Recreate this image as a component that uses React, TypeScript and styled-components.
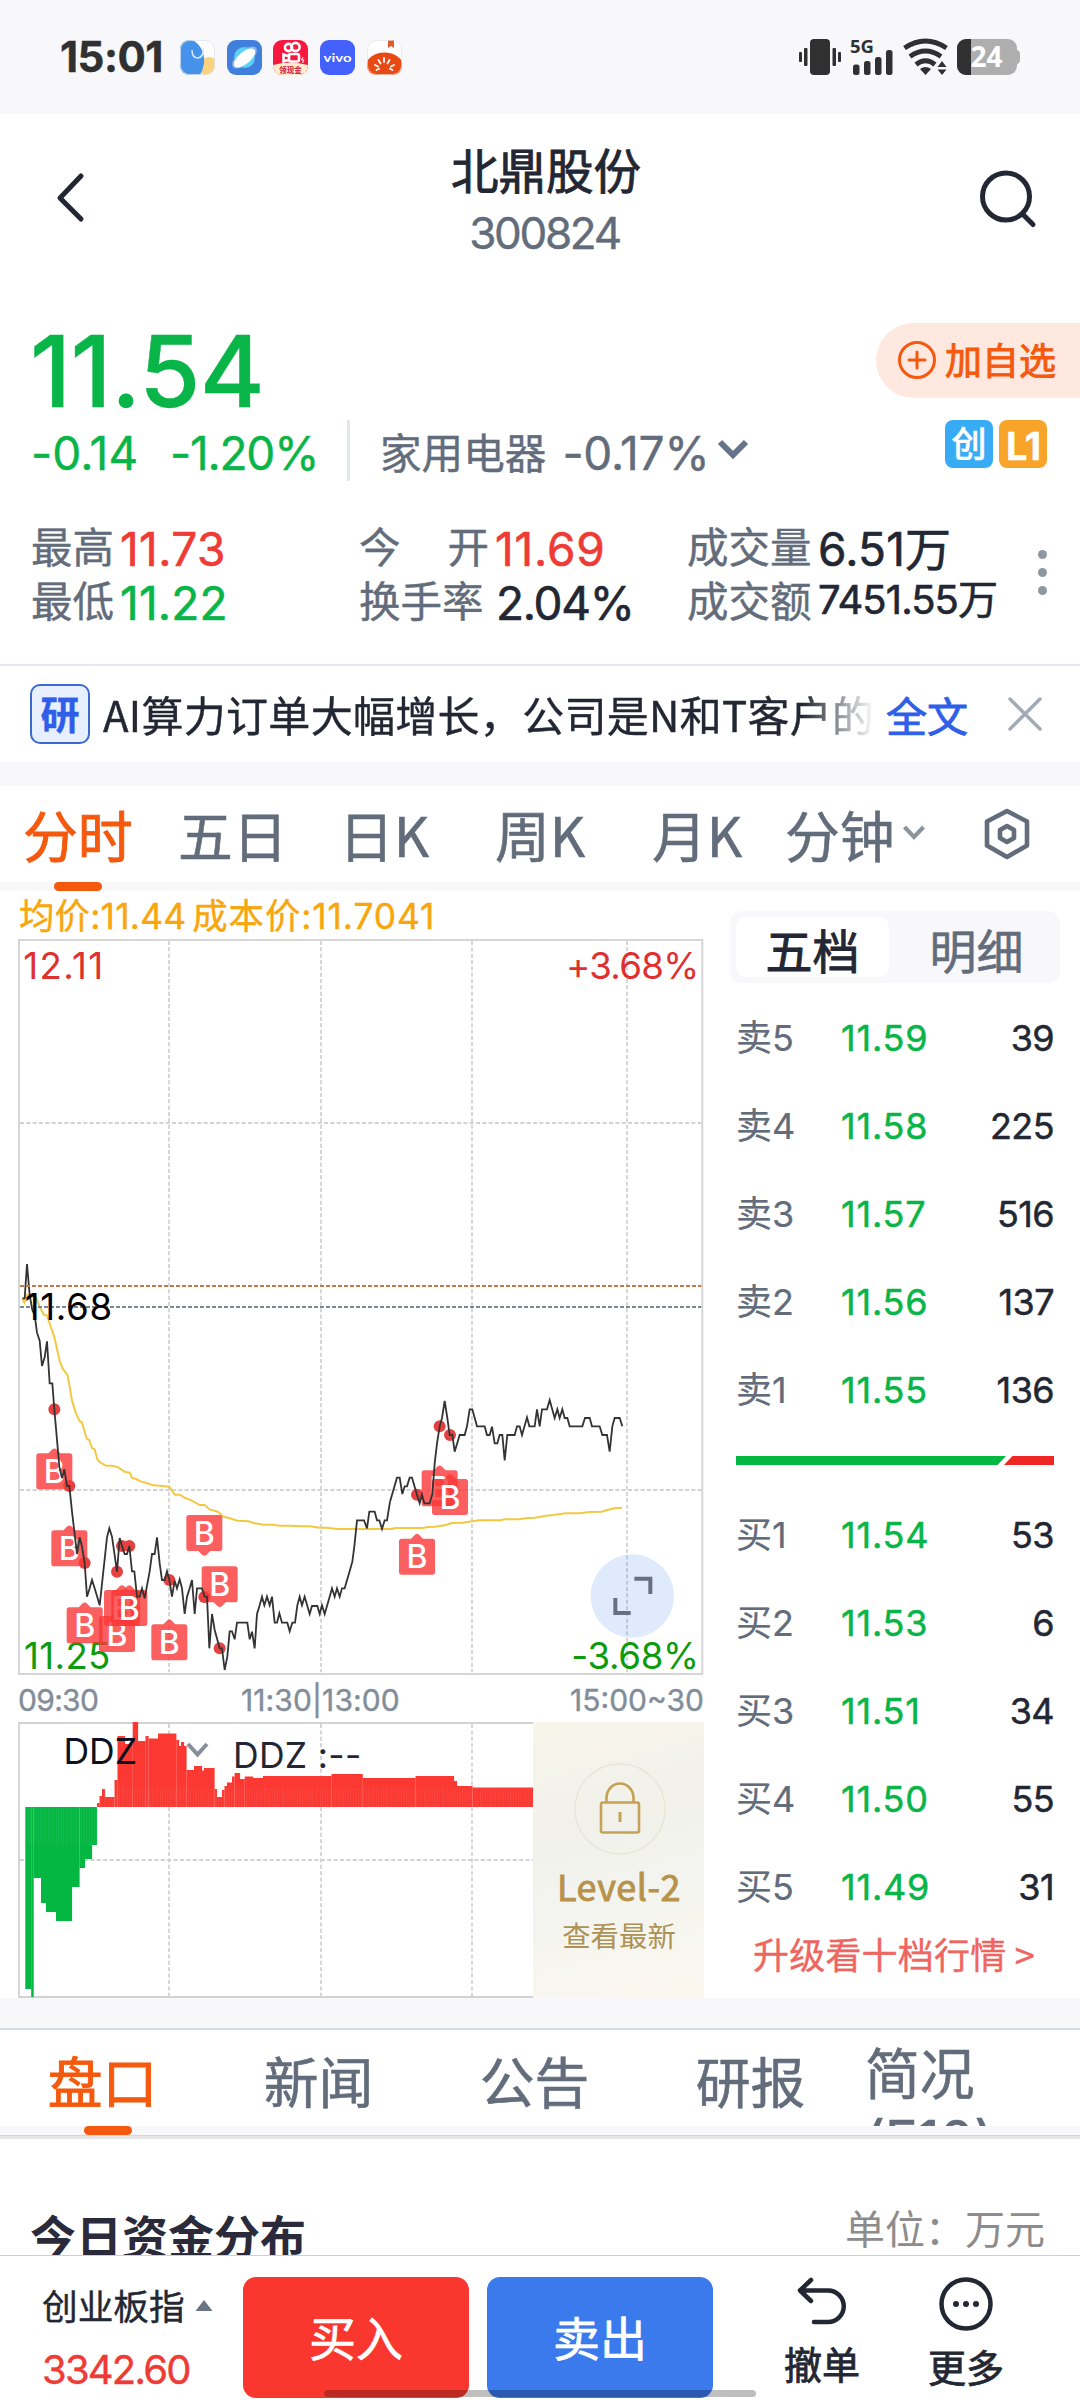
import React from "react";
import styled, { createGlobalStyle } from "styled-components";

const INK = "#232733";
const SLATE = "#626c7b";
const GREEN = "#09b548";
const RED = "#ef3b36";
const ORANGE = "#f4590e";
const MIST = "#f8f8fb";
const BLUE = "#2f5fe8";
const NUMERIC = `Inter, "Noto Sans CJK SC", sans-serif`;

const Global = createGlobalStyle`
  * { box-sizing: border-box; }
  body { margin: 0; background: #fff; }
  button { border: 0; padding: 0; background: none; font: inherit; color: inherit; }
`;

const Page = styled.main`
  position: relative;
  width: 1080px;
  height: 2400px;
  overflow: hidden;
  display: flex;
  flex-direction: column;
  background: #fff;
  color: ${INK};
  font-family: "Noto Sans CJK SC", "Noto Sans", sans-serif;
  -webkit-text-stroke: 0.4px;
  white-space: nowrap;
  line-height: 1;
`;

/* ---------- status bar ---------- */
const StatusBar = styled.header`
  height: 114px;
  flex: none;
  background: ${MIST};
  display: flex;
  align-items: center;
  padding: 0 58px 0 60px;
  svg { -webkit-text-stroke: 0; }
`;
const Clock = styled.span`
  width: 120px;
  padding-bottom: 1px;
  font-family: ${NUMERIC};
  font-size: 42px;
  font-weight: 700;
  letter-spacing: -0.5px;
  color: #303030;
`;
const AppIcons = styled.div`
  display: flex;
  gap: 11.7px;
`;
const SystemIcons = styled.div`
  margin-left: auto;
  display: flex;
`;

/* ---------- header ---------- */
const Header = styled.nav`
  height: 186px;
  flex: none;
  display: grid;
  grid-template-columns: 120px 1fr 120px;
  align-items: start;
  padding-top: 25px;
`;
const IconButton = styled.button<{ $top: number; $left: number }>`
  display: block;
  padding: ${(p) => p.$top}px 0 0 ${(p) => p.$left}px;
  text-align: left;
  svg { display: block; }
`;
const Titles = styled.div`
  display: flex;
  flex-direction: column;
  align-items: center;
  padding-left: 12px;
`;
const StockName = styled.h1`
  margin: 0;
  font-size: 47.5px;
  line-height: 60px;
  font-weight: 400;
  -webkit-text-stroke: 0.9px;
`;
const StockCode = styled.span`
  font-family: ${NUMERIC};
  font-size: 44px;
  line-height: 68px;
  padding-right: 3px;
  color: ${SLATE};
  letter-spacing: -2.3px;
`;

/* ---------- quote ---------- */
const Quote = styled.section`
  height: 364px;
  flex: none;
  display: flex;
  flex-direction: column;
`;
const PriceRow = styled.div`
  display: flex;
  justify-content: space-between;
  height: 120px;
`;
const Price = styled.strong`
  padding: 16px 0 0 30px;
  font-family: ${NUMERIC};
  font-size: 99px;
  line-height: 110px;
  font-weight: 500;
  letter-spacing: -0.6px;
  color: ${GREEN};
`;
const FollowButton = styled.button`
  margin-top: 23px;
  width: 204px;
  height: 75px;
  border-radius: 38px 0 0 38px;
  background: #fee8e0;
  color: ${ORANGE};
  display: flex;
  align-items: center;
  padding: 0 0 2px 21px;
  gap: 8px;
  font-size: 37px;
  -webkit-text-stroke: 0.9px;
`;
const ChangeRow = styled.div`
  height: 61px;
  display: flex;
  align-items: center;
  padding: 0 33px 0 31px;
  font-size: 46px;
`;
const Change = styled.span<{ $w: number; $ls: number }>`
  width: ${(p) => p.$w}px;
  padding-top: 4px;
  font-family: ${NUMERIC};
  color: ${GREEN};
  letter-spacing: ${(p) => p.$ls}px;
  line-height: 60px;
`;
const Sector = styled.div`
  border-left: 3px solid #e2e6ef;
  height: 61px;
  padding-left: 30px;
  display: flex;
  align-items: center;
  gap: 12px;
  color: ${SLATE};
  line-height: 60px;
`;
const SectorName = styled.span`
  font-size: 41.6px;
`;
const SectorChange = styled.span`
  padding-top: 4px;
  margin-left: 4px;
  width: 143px;
  font-family: ${NUMERIC};
  letter-spacing: -0.2px;
`;
const Badges = styled.div`
  margin-left: auto;
  align-self: flex-start;
  display: flex;
  gap: 6px;
`;
const Badge = styled.span<{ $bg: string }>`
  width: 48px;
  height: 48px;
  border-radius: 8px;
  background: ${(p) => p.$bg};
  color: #fff;
  font-size: 35px;
  line-height: 44px;
  font-weight: 500;
  text-align: center;
`;
const LevelBadge = styled(Badge)`
  font-family: ${NUMERIC};
  font-size: 38px;
  font-weight: 700;
  line-height: 52px;
  letter-spacing: -1px;
`;
const Stats = styled.div`
  margin-top: 38px;
  height: 108px;
  padding-left: 31px;
  display: grid;
  grid-template-columns: 328px 328px 345px 20px;
  grid-template-rows: 54px 54px;
  grid-auto-flow: column;
`;
const Stat = styled.div`
  display: flex;
  align-items: center;
  line-height: 54px;
`;
const StatLabel = styled.span<{ $w: number; $spread?: boolean }>`
  width: ${(p) => p.$w}px;
  padding: 0 ${(p) => (p.$spread ? 6 : 0)}px 2px 0;
  display: flex;
  justify-content: space-between;
  flex: none;
  font-size: 41.5px;
  color: ${SLATE};
`;
const StatValue = styled.span<{ $c?: string; $small?: boolean; $ls: number }>`
  padding-top: ${(p) => (p.$small ? 0 : 6)}px;
  font-family: ${NUMERIC};
  color: ${(p) => p.$c ?? INK};
  font-size: ${(p) => (p.$small ? 40 : 46)}px;
  letter-spacing: ${(p) => p.$ls}px;
  -webkit-text-stroke: 0.6px;
`;
const StatMore = styled.div`
  grid-column: 4;
  grid-row: 1 / 3;
  display: flex;
  flex-direction: column;
  align-items: center;
  justify-content: center;
  gap: 9px;
  padding: 0 0 2px 0;
  i { width: 9px; height: 9px; border-radius: 50%; background: #8d97a2; }
`;

/* ---------- news strip ---------- */
const News = styled.section`
  height: 98px;
  flex: none;
  border-top: 2px solid #e5e8ed;
  display: flex;
  align-items: center;
  padding-left: 30px;
  font-size: 42px;
`;
const NewsTag = styled.span`
  width: 60px;
  height: 60px;
  border-radius: 10px;
  border: 2px solid #3a69d2;
  background: #e8effe;
  color: ${BLUE};
  font-size: 39px;
  font-weight: 700;
  line-height: 52px;
  text-align: center;
`;
const NewsText = styled.p`
  margin: 0 0 0 13px;
  width: 769px;
  overflow: hidden;
  line-height: 58px;
  letter-spacing: 0.3px;
  -webkit-mask-image: linear-gradient(90deg, #000 700px, transparent 772px);
  mask-image: linear-gradient(90deg, #000 700px, transparent 772px);
`;
const NewsLink = styled.a`
  margin-left: 14px;
  width: 122px;
  color: ${BLUE};
  font-size: 41px;
  line-height: 58px;
  -webkit-text-stroke: 0.9px;
`;
const Band = styled.div<{ $h: number }>`
  height: ${(p) => p.$h}px;
  flex: none;
  background: ${MIST};
`;

/* ---------- period tabs ---------- */
const PeriodTabs = styled.div`
  height: 96px;
  flex: none;
  padding: 0 0 2px 23px;
  display: grid;
  grid-template-columns: 155px 161px 156px 157px 133px 110px auto auto;
  align-items: center;
  justify-content: start;
`;
const Tab = styled.button<{ $on?: boolean }>`
  font-size: 54.8px;
  line-height: 70px;
  text-align: left;
  color: ${(p) => (p.$on ? ORANGE : SLATE)};
  -webkit-text-stroke: ${(p) => (p.$on ? 0.9 : 0.6)}px;
`;
const DropArrow = styled.svg`
  margin-left: 8px;
`;
const Gear = styled.svg`
  margin: 2px 0 0 57px;
`;
const TabTrack = styled.div<{ $x: number }>`
  height: 9px;
  flex: none;
  background: ${MIST};
  padding-left: ${(p) => p.$x}px;
  &::before {
    content: "";
    display: block;
    width: 48px;
    height: 9px;
    border-radius: 4.5px;
    background: ${ORANGE};
  }
`;

/* ---------- chart + order book ---------- */
const Market = styled.section`
  height: 1107px;
  flex: none;
  display: flex;
`;
const ChartColumn = styled.div`
  width: 730px;
  padding-left: 18px;
  svg { display: block; }
`;
const AvgLine = styled.div`
  height: 48px;
  padding-left: 1px;
  font-family: ${NUMERIC};
  font-size: 35.4px;
  line-height: 52px;
  color: #f8a60c;
  display: flex;
  gap: 6px;
`;
const AvgPrice = styled.span`
  letter-spacing: 0.2px;
`;
const CostPrice = styled.span`
  letter-spacing: 0.9px;
`;
const TimeAxis = styled.div`
  width: 686px;
  height: 47px;
  display: grid;
  grid-template-columns: 223px 1fr auto;
  font-family: ${NUMERIC};
  font-size: 30px;
  line-height: 50px;
  color: #828d99;
`;
const Time = styled.span<{ $ls?: number }>`
  letter-spacing: ${(p) => p.$ls ?? 0}px;
`;
const SubChart = styled.div`
  width: 686px;
  height: 276px;
  display: flex;
`;
const LockPanel = styled.div`
  width: 171px;
  height: 276px;
  display: flex;
  flex-direction: column;
  align-items: center;
  padding: 41px 0 0 1px;
  background: linear-gradient(165deg, #f8f5ea 0%, #f1f1ea 35%, #f3f4ef 60%, #faf7ee 100%);
`;
const LockTitle = styled.span`
  margin-top: 5px;
  font-size: 36px;
  line-height: 46px;
  font-weight: 400;
  letter-spacing: 0.5px;
  color: #b8924a;
  -webkit-text-stroke: 0.9px;
`;
const LockHint = styled.span`
  font-size: 28.4px;
  line-height: 53px;
  color: #ac9254;
  -webkit-text-stroke: 0;
`;
const Book = styled.div`
  width: 330px;
  padding-top: 20px;
`;
const Segment = styled.div`
  height: 72px;
  border-radius: 12px;
  background: ${MIST};
  padding: 6px;
  display: flex;
  margin-bottom: 9px;
`;
const SegmentItem = styled.button<{ $on?: boolean }>`
  width: 153px;
  height: 60px;
  border-radius: 10px;
  font-size: 47px;
  line-height: 64px;
  background: ${(p) => (p.$on ? "#fff" : "transparent")};
  color: ${(p) => (p.$on ? INK : SLATE)};
  -webkit-text-stroke: ${(p) => (p.$on ? 0.9 : 0.6)}px;
  & + & { margin-left: 11px; }
`;
const Level = styled.div`
  height: 88px;
  display: grid;
  grid-template-columns: 105px 92px 1fr;
  padding: 0 6px 0 6px;
  font-family: ${NUMERIC};
  font-size: 36px;
  line-height: 93px;
  -webkit-text-stroke: 0.5px;
`;
const LevelName = styled.span`
  color: ${SLATE};
  -webkit-text-stroke: 0.2px;
`;
const LevelPrice = styled.span`
  color: ${GREEN};
  letter-spacing: 0.8px;
`;
const LevelCount = styled.span`
  text-align: right;
  letter-spacing: -0.6px;
`;
const Ratio = styled.svg`
  display: block;
  margin: 24px 0 24px 6px;
`;
const Upgrade = styled.a`
  display: block;
  padding-left: 23px;
  font-size: 36px;
  line-height: 49px;
  letter-spacing: 0.2px;
  color: #ef6560;
`;

/* ---------- info tabs ---------- */
const InfoTabs = styled.div`
  height: 98px;
  flex: none;
  border-top: 2px solid #d5dbe4;
  display: grid;
  grid-template-columns: 216px 216px 216px 216px 1fr;
  overflow: hidden;
`;
const InfoTab = styled(Tab)`
  height: 96px;
  padding: 0 11px 0 0;
  text-align: center;
  line-height: 98px;
`;
const WrappedTab = styled(Tab)`
  align-self: start;
  width: 150px;
  padding-left: 1px;
  white-space: normal;
  font-family: ${NUMERIC};
  line-height: 66px;
  margin-top: 11px;
`;
const Rule = styled.div`
  height: 4px;
  flex: none;
  background: #e6e6e7;
  border-top: 1px solid #cfd6de;
`;
const Funds = styled.section`
  height: 116px;
  flex: none;
  overflow: hidden;
  display: flex;
  justify-content: space-between;
  padding: 60px 35px 0 30px;
`;
const FundsTitle = styled.h2`
  margin: 0;
  font-size: 46px;
  line-height: 70px;
  font-weight: 700;
  color: #2b2a3b;
  -webkit-text-stroke: 0;
`;
const FundsUnit = styled.span`
  font-size: 40px;
  line-height: 57px;
  color: #8c8c8c;
  -webkit-text-stroke: 0;
`;

/* ---------- bottom bar ---------- */
const BottomBar = styled.footer`
  height: 145px;
  flex: none;
  border-top: 1px solid #c9d0d6;
  display: flex;
  background: #fff;
`;
const Index = styled.div`
  width: 243px;
  padding: 25px 0 0 42px;
`;
const IndexName = styled.div`
  display: flex;
  align-items: center;
  gap: 10px;
  font-size: 35.7px;
  line-height: 48px;
`;
const IndexValue = styled.div`
  margin-top: 13px;
  font-family: ${NUMERIC};
  font-size: 40px;
  line-height: 56px;
  letter-spacing: -1.8px;
  color: ${RED};
`;
const Trade = styled.button<{ $bg: string }>`
  width: 226px;
  height: 121px;
  margin: 21px 18px 0 0;
  border-radius: 13px;
  background: ${(p) => p.$bg};
  color: #fff;
  font-size: 47px;
  line-height: 115px;
  padding-bottom: 5px;
  -webkit-text-stroke: 0.7px;
`;
const Action = styled.button<{ $w: number; $lh: number }>`
  width: ${(p) => p.$w}px;
  display: flex;
  flex-direction: column;
  align-items: center;
  padding-top: 20px;
  font-size: 38px;
  line-height: ${(p) => p.$lh}px;
  -webkit-text-stroke: 0.8px;
`;
const HomeIndicator = styled.div`
  position: absolute;
  left: 324px;
  top: 2390px;
  width: 432px;
  height: 7px;
  border-radius: 4px;
  background: rgba(0, 0, 0, 0.25);
`;

const PRICE_MORNING =
  "67,295 74,295 81,192 89,285 97,330 104,345 111,398 119,422 126,498 134,472 141,424 149,550 157,550 163,628 178,800 186,834 193,808 201,858 208,858 216,935 231,1062 239,1012 246,1040 254,1089 261,1190 269,1165 276,1140 284,1165 299,1216 321,1012 328,985 336,1010 351,1115 359,1014 366,1038 374,1062 381,1062 388,1038 396,1114 403,1114 411,1190 419,1190 426,1165 434,1195 449,1114 456,1062 464,1062 471,1012 479,1090 486,1140 494,1140 501,1114 508,1140 516,1190 524,1142 531,1165 539,1138 546,1165 554,1242 561,1190 569,1165 576,1140 584,1242 591,1165 606,1165 614,1190 621,1190 628,1345 636,1242 644,1290 659,1345 666,1345 674,1410 682,1370 689,1294 696,1294 704,1318 711,1268 742,1268 749,1318 756,1295 764,1345 771,1242 779,1216 786,1190 793,1216 801,1190 809,1216 816,1190 824,1268 831,1268 838,1240 846,1268 862,1268 869,1294 877,1268 885,1268 892,1216 899,1190 906,1216 914,1190 929,1242 936,1218 952,1218 959,1242 966,1216 974,1242 989,1190 996,1165 1004,1190 1011,1165 1019,1190 1026,1165 1034,1165 1050,1110 1057,1085 1063,1040 1071,961 1092,961 1101,985 1108,935 1124,935 1131,961 1138,961 1146,987 1154,961 1161,961 1170,905";
const PRICE_AFTERNOON =
  "150,455 171,383 179,383 187,432 194,409 201,409 209,383 216,383 231,434 239,460 246,434 253,460 269,460 277,432 284,340 291,280 299,229 306,204 314,153 322,204 329,255 337,255 344,305 352,278 359,255 374,255 381,229 389,178 397,178 411,229 434,229 441,255 449,255 456,230 464,280 472,280 479,255 487,255 494,331 502,255 524,255 531,229 539,229 546,255 561,202 568,229 584,229 591,178 599,229 606,178 621,178 629,150 644,204 652,178 659,204 667,178 674,204 682,204 689,229 727,229 735,204 749,204 756,229 779,229 787,255 801,255 809,305 817,229 824,204 839,204 847,229";
const AVG_MORNING =
  "67,296 73,308 82,284 108,292 120,322 132,345 141,346 152,380 163,410 172,452 180,486 188,506 202,525 209,560 216,602 228,640 238,662 246,668 260,716 268,720 276,744 284,748 292,778 300,787 318,797 336,797 352,801 376,816 389,818 396,834 408,837 424,845 440,849 460,856 480,857 508,860 524,884 540,884 556,894 574,901 599,915 614,915 630,929 654,935 670,950 690,955 712,962 746,964 760,969 790,974 820,974 840,977 870,977 900,979 930,979 960,983 980,983 1012,987 1180,987";
const AVG_AFTERNOON =
  "150,537 168,534 246,534 266,531 286,530 318,525 334,519 368,518 396,514 418,511 482,511 494,508 538,508 556,505 584,503 618,497 640,495 676,490 718,490 748,486 784,485 800,481 822,475 846,473";

type Point = [number, number];
const DOTS: Point[] = [
  [163, 628], [208, 858], [254, 1089], [351, 1115], [366, 1038], [388, 1038],
  [508, 1140], [613, 1191], [659, 1345], [1319, 679], [1350, 705], [1251, 884],
];
const BUYS: [number, number, boolean][] = [
  [163, 814, true], [208, 1045, true], [254, 1276, true], [351, 1302, true],
  [366, 1224, true], [388, 1224, true], [508, 1327, true], [613, 999, false],
  [659, 1153, false], [1319, 865, true], [1350, 891, true], [1251, 1070, true],
];

function BuyMark({ x, y, up }: { x: number; y: number; up: boolean }) {
  return (
    <g transform={`translate(${x} ${y})`}>
      <path
        d={
          up
            ? "M-46-54H-18L-6-66Q0-71 6-66L18-54H46Q54-54 54-46V46Q54 54 46 54H-46Q-54 54-54 46V-46Q-54-54-46-54Z"
            : "M-46-54H46Q54-54 54-46V46Q54 54 46 54H18L6 66Q0 71-6 66L-18 54H-46Q-54 54-54 46V-46Q-54-54-46-54Z"
        }
        fill="#fa3737"
        opacity=".8"
      />
      <text x="0" y="35" fontSize="96" fontWeight="500" fill="#fff" textAnchor="middle">B</text>
    </g>
  );
}

/* One user unit is a third of a pixel. */
function MinuteChart() {
  return (
    <svg width="686" height="736" viewBox="0 0 2058 2208" fontFamily={NUMERIC}>
      <g fill="none" stroke="#d2d2d2" strokeWidth="5.4">
        <rect x="3" y="3" width="2050" height="2202" />
        <path d="M453 6V2200M909 6V2200M1362 6V2200M1827 6V2200M6 552H2050M6 1653H2050" strokeDasharray="12 7" />
      </g>
      <g fontSize="110">
        <text x="16" y="121" fill="#df2f2f" letterSpacing="4">12.11</text>
        <text x="2042" y="121" fill="#df2f2f" textAnchor="end" letterSpacing="-2">+3.68%</text>
        <text x="18" y="2191" fill="#0c9b0c" letterSpacing="1">11.25</text>
      </g>
      <g transform="translate(-54 783)">
        <polyline points={AVG_MORNING} fill="none" stroke="#f3c944" strokeWidth="6" />
        {DOTS.map(([x, y], i) => <circle key={i} cx={x} cy={y} r="18" fill="#e64141" />)}
        {BUYS.map(([x, y, up], i) => <BuyMark key={i} x={x} y={y} up={up} />)}
        <polyline points={PRICE_MORNING} fill="none" stroke="#333" strokeWidth="5.4" />
      </g>
      <g transform="translate(966 1233)" fill="none">
        <polyline points={AVG_AFTERNOON} stroke="#f3c944" strokeWidth="6" />
        <polyline points={PRICE_AFTERNOON} stroke="#333" strokeWidth="5.4" />
      </g>
      <path d="M6 1041H2050" stroke="#c57a45" strokeWidth="6" strokeDasharray="12 6" />
      <path d="M6 1104H2050" stroke="#7d8691" strokeWidth="6" strokeDasharray="12 6" />
      <text x="20" y="1143" fontSize="110" letterSpacing="2" fill="#000">11.68</text>
      <circle cx="1843" cy="1971" r="125" fill="#3a7aec" opacity=".16" />
      <path d="M1849 1919H1897V1965M1792 1977V2022H1838" fill="none" stroke="#667081" strokeWidth="12" />
      <text x="2042" y="2191" fontSize="110" letterSpacing="-1" fill="#0c9b0c" textAnchor="end">-3.68%</text>
    </svg>
  );
}

/* [from, to, height] runs in px, measured from the zero line. */
const OUTFLOW: [number, number, number][] = [
  [25.3, 31.2, 182], [31.2, 33.6, 190], [33.6, 41, 71], [41, 46, 96], [46, 56, 105],
  [56, 72, 114], [72, 79.5, 80], [79.5, 85, 61], [85, 92, 52], [92, 97, 38],
];
const INFLOW: [number, number, number][] = [
  [97, 99.5, 4], [99.5, 102, 11], [102, 105, 18], [105, 114.5, 10], [114.5, 117.5, 27],
  [117.5, 125, 71], [125, 132.7, 63], [132.7, 138, 85], [138, 145.5, 66], [145.5, 148.5, 71],
  [148.5, 158, 68.5], [158, 176.3, 73.5], [176.3, 179, 67], [179, 181, 61], [181, 184, 65],
  [184, 186.5, 61], [186.5, 194, 37], [194, 202, 41], [202, 204, 36.5], [204, 214.5, 39],
  [214.5, 217, 18], [217, 222, 10], [222, 224.5, 17], [224.5, 227, 21], [227, 232, 24.5],
  [232, 234.6, 30.5], [234.6, 240, 34], [240, 244.7, 28], [244.7, 253, 30.5], [253, 263, 29],
  [263, 331.5, 31], [331.5, 362.7, 33], [362.7, 415.5, 29], [415.5, 454, 31],
  [454, 457, 26], [457, 472.5, 21], [472.5, 533, 19.5],
];

function DdzChart() {
  const grain = Array.from({ length: 199 }, (_, i) => 27.9 + i * 2.54);
  return (
    <svg width="515" height="276" viewBox="18 0 515 276" fontFamily={NUMERIC}>
      <g fill="none" stroke="#d2d2d2" strokeWidth="1.8">
        <path d="M533 1H19V275H533" />
        <path d="M169 2V274M321 2V274M472 2V274M20 138H533" strokeDasharray="4 2.4" />
      </g>
      {OUTFLOW.map(([a, b, h]) => <rect key={a} x={a} y="85" width={b - a + 0.1} height={h} fill="#04b743" />)}
      {INFLOW.map(([a, b, h]) => <rect key={a} x={a} y={85 - h} width={b - a + 0.1} height={h} fill="#fb3831" />)}
      <g fill="#fff" opacity=".1">
        {grain.map((x) => <rect key={x} x={x} y={x < 97 ? 85 : 66} width=".6" height={x < 97 ? 38 : 19} />)}
      </g>
      <g fontSize="35.5">
        <text x="63.500" y="41.500" fill="#0b1120">DDZ</text>
        <text x="233" y="46" fill={INK} letterSpacing=".3" xmlSpace="preserve">DDZ :--</text>
      </g>
      <path d="M188 22L197.5 32.5L207 22" fill="none" stroke="#858f9b" strokeWidth="4" />
    </svg>
  );
}

const ASKS = [["卖5", "11.59", "39"], ["卖4", "11.58", "225"], ["卖3", "11.57", "516"], ["卖2", "11.56", "137"], ["卖1", "11.55", "136"]];
const BIDS = [["买1", "11.54", "53"], ["买2", "11.53", "6"], ["买3", "11.51", "34"], ["买4", "11.50", "55"], ["买5", "11.49", "31"]];

function Levels({ rows }: { rows: string[][] }) {
  return (
    <>
      {rows.map(([name, price, count]) => (
        <Level key={name}>
          <LevelName>{name}</LevelName>
          <LevelPrice>{price}</LevelPrice>
          <LevelCount>{count}</LevelCount>
        </Level>
      ))}
    </>
  );
}

function AppIconRow() {
  return (
    <AppIcons>
      <svg width="35" height="35" viewBox="0 0 35 35">
        <clipPath id="tile"><rect width="35" height="35" rx="9" /></clipPath>
        <g clipPath="url(#tile)">
          <rect width="35" height="35" fill="#fff" />
          <circle cx="29" cy="27" r="10" fill="#fbd37e" />
          <path d="M0 0H12C21 4 25 14 24 23Q23 30 20 35H0Z" fill="#4492ea" />
          <path d="M12 10Q12 18 18 18Q24 17 23 8" fill="none" stroke="#d4e8ff" strokeWidth="1.5" />
        </g>
        <rect x=".5" y=".5" width="34" height="34" rx="9" fill="none" stroke="#dde1e8" strokeWidth=".8" />
      </svg>
      <svg width="35" height="35" viewBox="0 0 35 35">
        <rect width="35" height="35" rx="9" fill="#417fdd" />
        <ellipse cx="17.5" cy="17.5" rx="15" ry="7" transform="rotate(-40 17.5 17.5)" fill="#8db2ee" />
        <circle cx="17.5" cy="17.5" r="10.5" fill="#5dd0f6" />
        <ellipse cx="17.5" cy="18" rx="13" ry="6" transform="rotate(-40 17.5 18)" fill="#fff" />
      </svg>
      <svg width="35" height="35" viewBox="0 0 35 35">
        <g clipPath="url(#tile)">
          <rect width="35" height="35" fill="#f8173f" />
          <path d="M0 25Q17 20 35 25V35H0Z" fill="#ffeccb" />
          <g fill="none" stroke="#fff" strokeWidth="2.6">
            <circle cx="15.5" cy="7.5" r="3.6" />
            <circle cx="22.5" cy="7" r="4.1" />
            <rect x="16" y="14" width="10" height="7.5" rx="2" />
            <path d="M15 16L10.500 14.500V21.500L15 20" />
          </g>
          <path d="M30 17L28.500 20H31L29.500 23" stroke="#fff" fill="none" />
          <text x="17.500" y="33" fontSize="7.500" fontWeight="700" textAnchor="middle" fill="#d4143a">领现金</text>
        </g>
      </svg>
      <svg width="35" height="35" viewBox="0 0 35 35">
        <rect width="35" height="35" rx="9" fill="#4360fb" />
        <text x="17.500" y="21.500" fontFamily="Lato, sans-serif" fontSize="12" textLength="28" lengthAdjust="spacingAndGlyphs" textAnchor="middle" fontWeight="700" fill="#fff">vivo</text>
      </svg>
      <svg width="35" height="35" viewBox="0 0 35 35">
        <g clipPath="url(#tile)">
          <rect width="35" height="35" fill="#fff" />
          <path d="M21 0H27V8L24 6L21 8Z" fill="#e15a2c" />
          <ellipse cx="17.500" cy="26" rx="18.500" ry="13.500" fill="#e84a15" />
          <path d="M17 18V22M11.500 20L13.500 23.500M22.500 20L20.500 23.500M8 25L11 26.500M27 25L24 26.500M9.500 30L12 28.800M25.500 30L23 28.800" stroke="#fff" strokeWidth="1.800" strokeLinecap="round" />
        </g>
        <rect x=".5" y=".5" width="34" height="34" rx="9" fill="none" stroke="#e4e0e0" strokeWidth=".7" />
      </svg>
    </AppIcons>
  );
}

function SystemIconRow() {
  return (
    <SystemIcons>
      <svg width="223" height="38" viewBox="799 38 223 38" fontFamily={`"Noto Sans", sans-serif`}>
        <g fill="#303030">
          <rect x="810" y="39" width="20" height="36" rx="4" />
          <rect x="804" y="48" width="3.500" height="18" rx="1" />
          <rect x="799" y="52" width="3" height="10" rx="1" />
          <rect x="832.500" y="48" width="3.500" height="18" rx="1" />
          <rect x="838" y="52" width="3" height="10" rx="1" />
          <rect x="853" y="64.500" width="6.500" height="10.500" rx="2.500" />
          <rect x="864" y="61" width="6.500" height="14" rx="2.500" />
          <rect x="875" y="57" width="6.500" height="18" rx="2.500" />
          <rect x="886" y="50" width="6.500" height="25" rx="2.500" />
          <path d="M920 69L925.500 75L931 69Q925.500 65 920 69Z" />
          <path d="M937.500 67L942 61L946.500 67ZM937.500 69.500L942 75L946.500 69.500Z" />
        </g>
        <text x="850" y="53" fontSize="18.500" fontWeight="700" fill="#303030">5G</text>
        <g fill="none" stroke="#303030" strokeWidth="4.800">
          <path d="M904.500 48Q925.500 34 946.500 48" />
          <path d="M910 56.500Q925.500 45.500 941 56.500" />
          <path d="M916 64.500Q925.500 57 935 64.500" />
        </g>
        <clipPath id="cell"><rect x="957" y="39" width="60" height="36" rx="9" /></clipPath>
        <path d="M1015 50H1017Q1020 51 1020 54V60Q1020 63 1017 64H1015Z" fill="#aeaeae" />
        <g clipPath="url(#cell)">
          <rect x="957" y="39" width="60" height="36" fill="#aeaeae" />
          <rect x="957" y="39" width="14" height="36" fill="#303030" />
        </g>
        <text x="986.500" y="67" fontSize="28" fontWeight="700" textAnchor="middle" fill="#fff">24</text>
      </svg>
    </SystemIcons>
  );
}

export default function App() {
  return (
    <Page>
      <Global />
      <StatusBar>
        <Clock>15:01</Clock>
        <AppIconRow />
        <SystemIconRow />
      </StatusBar>

      <Header>
        <IconButton $top={33} $left={54}>
          <svg width="34" height="52" viewBox="0 0 34 52" fill="none" stroke={INK} strokeWidth="5" strokeLinecap="round" strokeLinejoin="round">
            <path d="M27 4L6 26L27 47" />
          </svg>
        </IconButton>
        <Titles>
          <StockName>北鼎股份</StockName>
          <StockCode>300824</StockCode>
        </Titles>
        <IconButton $top={29} $left={18}>
          <svg width="62" height="62" viewBox="0 0 62 62" fill="none" stroke={INK} strokeWidth="5" strokeLinecap="round">
            <circle cx="28" cy="28.500" r="23.500" />
            <path d="M45.500 47L55 56.500" />
          </svg>
        </IconButton>
      </Header>

      <Quote>
        <PriceRow>
          <Price>11.54</Price>
          <FollowButton>
            <svg width="40" height="40" viewBox="0 0 40 40" fill="none" stroke={ORANGE} strokeWidth="3">
              <circle cx="20" cy="20" r="17.500" />
              <path d="M12 20H28M20 12V28" strokeLinecap="round" />
            </svg>
            加自选
          </FollowButton>
        </PriceRow>
        <ChangeRow>
          <Change $w={139} $ls={0.1}>-0.14</Change>
          <Change $w={177} $ls={-1.2}>-1.20%</Change>
          <Sector>
            <SectorName>家用电器</SectorName>
            <SectorChange>-0.17%</SectorChange>
            <svg width="32" height="26" viewBox="0 0 32 26" fill="none" stroke="#65748a" strokeWidth="6">
              <path d="M3 4L16 17L29 4" />
            </svg>
          </Sector>
          <Badges>
            <Badge $bg="#37acf5">创</Badge>
            <LevelBadge $bg="#f8a32a">L1</LevelBadge>
          </Badges>
        </ChangeRow>
        <Stats>
          <Stat><StatLabel $w={89}>最高</StatLabel><StatValue $ls={0.4} $c={RED}>11.73</StatValue></Stat>
          <Stat><StatLabel $w={89}>最低</StatLabel><StatValue $ls={0.2} $c={GREEN}>11.22</StatValue></Stat>
          <Stat><StatLabel $w={136} $spread><span>今</span><span>开</span></StatLabel><StatValue $ls={0.8} $c={RED}>11.69</StatValue></Stat>
          <Stat><StatLabel $w={137}>换手率</StatLabel><StatValue $ls={-1.3}>2.04%</StatValue></Stat>
          <Stat><StatLabel $w={131}>成交量</StatLabel><StatValue $ls={0.2}>6.51万</StatValue></Stat>
          <Stat><StatLabel $w={131}>成交额</StatLabel><StatValue $small $ls={-0.9}>7451.55万</StatValue></Stat>
          <StatMore><i /><i /><i /></StatMore>
        </Stats>
      </Quote>

      <News>
        <NewsTag>研</NewsTag>
        <NewsText>AI算力订单大幅增长，公司是N和T客户的</NewsText>
        <NewsLink>全文</NewsLink>
        <svg width="34" height="34" viewBox="0 0 34 34" fill="none" stroke="#a2aab5" strokeWidth="3.500" strokeLinecap="round">
          <path d="M2 2L32 32M32 2L2 32" />
        </svg>
      </News>
      <Band $h={24} />

      <PeriodTabs>
        <Tab $on>分时</Tab>
        <Tab>五日</Tab>
        <Tab>日K</Tab>
        <Tab>周K</Tab>
        <Tab>月K</Tab>
        <Tab>分钟</Tab>
        <DropArrow width="22" height="16" viewBox="0 0 22 16" fill="none" stroke="#8a949c" strokeWidth="4">
          <path d="M1.500 2L11 12L20.500 2" />
        </DropArrow>
        <Gear width="50" height="54" viewBox="0 0 50 54" fill="none" stroke="#626c7b" strokeWidth="4.600" strokeLinejoin="round">
          <path d="M25 4L45 14.500V38.500L25 50L5 38.500V14.500Z" />
          <path d="M25 19L32 23V31L25 35L18 31V23Z" />
        </Gear>
      </PeriodTabs>
      <TabTrack $x={54} />

      <Market>
        <ChartColumn>
          <AvgLine><AvgPrice>均价:11.44</AvgPrice><CostPrice>成本价:11.7041</CostPrice></AvgLine>
          <MinuteChart />
          <TimeAxis><Time $ls={-0.7}>09:30</Time><Time $ls={0.1}>11:30|13:00</Time><Time>15:00~30</Time></TimeAxis>
          <SubChart>
            <DdzChart />
            <LockPanel>
              <svg width="94" height="94" viewBox="0 0 94 94" fill="none">
                <circle cx="48" cy="46" r="45" stroke="#e9e6d8" strokeWidth="1.500" />
                <g stroke="#c5a255" strokeWidth="2.600">
                  <rect x="29" y="39.500" width="38" height="30" rx="2" />
                  <path d="M34.500 39V35A13.500 14.500 0 0 1 61.500 35V39" />
                  <path d="M48 49V59" strokeWidth="3" />
                </g>
              </svg>
              <LockTitle>Level-2</LockTitle>
              <LockHint>查看最新</LockHint>
            </LockPanel>
          </SubChart>
        </ChartColumn>
        <Book>
          <Segment>
            <SegmentItem $on>五档</SegmentItem>
            <SegmentItem>明细</SegmentItem>
          </Segment>
          <Levels rows={ASKS} />
          <Ratio width="318" height="9" viewBox="0 0 318 9">
            <path d="M0 0H270L261.500 9H0Z" fill="#04b743" />
            <path d="M276.500 0H318V9H268Z" fill="#ee2724" />
          </Ratio>
          <Levels rows={BIDS} />
          <Upgrade>升级看十档行情 &gt;</Upgrade>
        </Book>
      </Market>
      <Band $h={30} />

      <InfoTabs>
        <InfoTab $on>盘口</InfoTab>
        <InfoTab>新闻</InfoTab>
        <InfoTab>公告</InfoTab>
        <InfoTab>研报</InfoTab>
        <WrappedTab>简况 (F10)</WrappedTab>
      </InfoTabs>
      <TabTrack $x={84} />
      <Rule />

      <Funds>
        <FundsTitle>今日资金分布</FundsTitle>
        <FundsUnit>单位：万元</FundsUnit>
      </Funds>

      <BottomBar>
        <Index>
          <IndexName>
            创业板指
            <svg width="18" height="11" viewBox="0 0 18 11"><path d="M9 0L17.500 11H.5Z" fill="#6a7484" /></svg>
          </IndexName>
          <IndexValue>3342.60</IndexValue>
        </Index>
        <Trade $bg="#fa372f">买入</Trade>
        <Trade $bg="#3a7aec">卖出</Trade>
        <Action $w={182} $lh={61}>
          <svg width="56" height="56" viewBox="0 0 56 56" fill="none" stroke={INK} strokeWidth="4.500" strokeLinecap="round" strokeLinejoin="round">
            <path d="M17 4L6 14.500L17 25M7 14.500H34A15.500 15.500 0 0 1 34 46H20" />
          </svg>
          撤单
        </Action>
        <Action $w={106} $lh={67}>
          <svg width="56" height="56" viewBox="0 0 56 56" fill="none" stroke={INK} strokeWidth="4.500">
            <circle cx="28" cy="28" r="24.500" />
            <g fill={INK} stroke="none">
              <circle cx="18" cy="28" r="3" />
              <circle cx="28" cy="28" r="3" />
              <circle cx="38" cy="28" r="3" />
            </g>
          </svg>
          更多
        </Action>
      </BottomBar>
      <HomeIndicator />
    </Page>
  );
}
